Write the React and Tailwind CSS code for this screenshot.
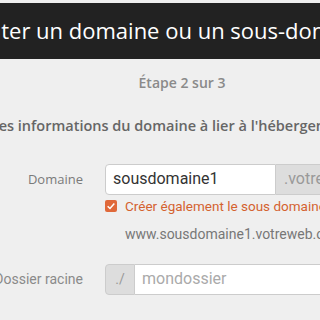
import React from 'react'

const App = () => {
  return (
    <div className="h-[320px] w-[320px] overflow-hidden bg-[#efefef] font-['Open_Sans',sans-serif]">
      <div className="ml-[-118px] w-[600px] pt-[3px]">
        <div className="flex h-[56px] items-center rounded-t-[4px] bg-[#222222] pb-[1px] pl-[73px]">
          <h1 className="whitespace-nowrap text-[22px] text-white">
            Ajouter un domaine ou un sous-domaine
          </h1>
        </div>

        <p className="mt-[13px] text-center text-[14px] font-semibold text-[#8a8a8a]">Étape 2 sur 3</p>

        <p className="mt-[22px] whitespace-nowrap pl-[30px] text-[14.5px] font-semibold text-[#666666]">
          Renseignez les informations du domaine à lier à l'hébergement.
        </p>

        <div className="mt-[27px] grid grid-cols-[201px_1fr] gap-x-[22px]">
          <label className="self-center text-right text-[13px] text-[#7a7a7a]">Domaine</label>
          <div className="flex h-[31px] w-[300px]">
            <div className="flex w-[171px] items-center rounded-l-[4px] border border-[#cccccc] bg-white px-[7px] font-['Roboto',sans-serif] text-[16px] text-[#333333]">
              sousdomaine1
            </div>
            <div className="flex flex-1 items-center border border-l-0 border-[#cccccc] bg-[#dddddd] px-[8px] font-['Roboto',sans-serif] text-[16px] text-[#999999]">
              .votreweb.ovh
            </div>
          </div>

          <div />
          <div className="mt-[5px] font-['Roboto',sans-serif]">
            <div className="flex h-[13px] items-center gap-[8px]">
              <span className="flex h-[12px] w-[12px] items-center justify-center rounded-[2px] bg-[#e0693a]">
                <svg viewBox="0 0 12 12" className="h-[10px] w-[10px]">
                  <path d="M2 6.2 L4.8 9 L10 3" fill="none" stroke="white" strokeWidth="1.8" />
                </svg>
              </span>
              <span className="whitespace-nowrap text-[13.5px] text-[#d4622f]">Créer également le sous domaine</span>
            </div>
            <p className="ml-[20px] mt-[11px] whitespace-nowrap text-[14px] text-[#777777]">www.sousdomaine1.votreweb.ovh</p>
          </div>

          <label className="mt-[19px] self-center whitespace-nowrap text-right font-['Roboto',sans-serif] text-[14px] text-[#8a8a8a]">
            Dossier racine
          </label>
          <div className="mt-[19px] flex h-[31px] w-[300px]">
            <div className="flex w-[30px] items-center justify-center rounded-l-[4px] border border-[#cccccc] bg-[#dddddd] font-['Roboto',sans-serif] text-[14px] text-[#999999]">
              ./
            </div>
            <div className="flex flex-1 items-center border border-l-0 border-[#cccccc] bg-white px-[7px] font-['Roboto',sans-serif] text-[16px] text-[#aaaaaa]">
              mondossier
            </div>
          </div>
        </div>
      </div>
    </div>
  )
}

export default App
